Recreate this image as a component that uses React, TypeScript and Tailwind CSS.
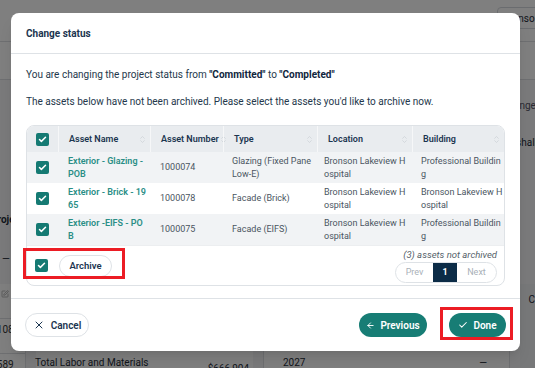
import { ArrowLeft, Check, ChevronsUpDown, SquarePen, X } from 'lucide-react';

const rows = [
  {
    name: ['Exterior - Glazing -', 'POB'],
    number: '1000074',
    type: ['Glazing (Fixed Pane', 'Low-E)'],
    location: ['Bronson Lakeview H', 'ospital'],
    building: ['Professional Buildin', 'g'],
  },
  {
    name: ['Exterior - Brick - 19', '65'],
    number: '1000078',
    type: ['Facade (Brick)'],
    location: ['Bronson Lakeview H', 'ospital'],
    building: ['Bronson Lakeview H', 'ospital'],
  },
  {
    name: ['Exterior -EIFS - PO', 'B'],
    number: '1000075',
    type: ['Facade (EIFS)'],
    location: ['Bronson Lakeview H', 'ospital'],
    building: ['Professional Buildin', 'g'],
  },
];

const cols = 'grid grid-cols-[31px_92px_73px_94px_95px_92px]';

function Box() {
  return (
    <span className="flex h-[13px] w-[13px] items-center justify-center rounded-[2px] bg-[#157a73]">
      <Check className="h-[9px] w-[9px] text-white" strokeWidth={4} />
    </span>
  );
}

function Lines({ parts }: { parts: string[] }) {
  return (
    <div>
      {parts.map((p) => (
        <span key={p} className="block whitespace-nowrap">
          {p}
        </span>
      ))}
    </div>
  );
}

function Head({ label }: { label: string }) {
  return (
    <div className="flex items-center justify-between border-l border-[#f6f7f8] pl-[10px] pr-[3px]">
      <span className="whitespace-nowrap">{label}</span>
      <ChevronsUpDown className="h-[9px] w-[9px] shrink-0 text-[#c4c9ce]" strokeWidth={1.5} />
    </div>
  );
}

function Backdrop() {
  return (
    <div className="absolute inset-0 bg-[#f4f5f7] text-[#1e2b38]">
      <div className="flex h-[42px] items-start justify-end border-b border-[#dcdfe3] bg-white">
        <div className="mr-[-12px] mt-[7px] flex h-[22px] w-[50px] items-center rounded-[4px] border border-[#d5d9de] pl-[3px] text-[10px]">
          Sponsor
        </div>
      </div>
      <div className="h-[38px] border-b border-[#dcdfe3] bg-white" />
      <div className="flex justify-end pt-[18px] text-[10px] text-[#556]">
        <span className="mr-[-6px]">Changes</span>
      </div>
      <div className="mt-[22px] flex justify-end text-[10px]">
        <span className="mr-[-2px]">Marshall</span>
      </div>
      <div className="ml-[-9px] mt-[62px] text-[10px] font-bold">Project</div>
      <div className="ml-[2px] mt-[24px] text-[10px]">—</div>
      <div className="mt-[18px] flex gap-[10px]">
        <div className="flex h-[90px] w-[27px] flex-col border-r border-[#dcdfe3] bg-white text-[10px] text-[#333]">
          <SquarePen className="ml-[1px] mt-[6px] h-[8px] w-[8px] text-[#999]" />
          <div className="mt-[20px] border-t border-[#dcdfe3] pt-[3px]">
            <span className="ml-[-22px]">$89,108</span>
          </div>
          <div className="mt-[16px] border-t border-[#dcdfe3] pt-[3px]">
            <span className="ml-[-22px]">$12,589</span>
          </div>
        </div>
        <div className="h-[90px] w-[223px] bg-white" />
        <div className="h-[90px] w-[255px] border border-[#dcdfe3] bg-white" />
        <div className="h-[90px] flex-1 bg-[#eef0f2] pl-[8px] pt-[8px] text-[10px]">C</div>
      </div>
      <div className="absolute left-[27px] top-[352px] flex w-[230px] justify-between px-[8px] pt-[3px] text-[10px]">
        <span>Total Labor and Materials</span>
        <span className="mt-[6px]">$666,904</span>
      </div>
      <div className="absolute left-[275px] top-[352px] flex w-[220px] justify-between px-[8px] pt-[3px] text-[10px]">
        <span>2027</span>
        <span>—</span>
      </div>
    </div>
  );
}

export default function App() {
  return (
    <div className="relative h-[368px] w-[535px] overflow-hidden font-['Roboto',sans-serif]">
      <Backdrop />
      <div className="absolute inset-0 bg-black/50" />

      <div className="absolute left-[11px] top-[13px] flex h-[338px] w-[509px] flex-col rounded-[8px] bg-white text-[#24374b] shadow-lg">
        <div className="flex h-[41px] items-center border-b border-[#dee2e6] px-[15px]">
          <h1 className="text-[10px] font-bold text-[#1b3550]">Change status</h1>
        </div>

        <div className="px-[15px] pt-[13px] text-[10px] leading-[15px]">
          <p>
            You are changing the project status from <strong className="text-[#10263d]">"Committed"</strong> to{' '}
            <strong className="text-[#10263d]">"Completed"</strong>
          </p>
          <p className="mt-[12px]">The assets below have not been archived. Please select the assets you'd like to archive now.</p>

          <div className="mt-[16px] overflow-hidden rounded-[8px] border border-[#dee2e6] text-[9px] leading-[13px]">
            <div className={`${cols} h-[26px] bg-[#e9ecef] font-semibold text-[#1b3550]`}>
              <div className="flex items-center justify-center">
                <Box />
              </div>
              <Head label="Asset Name" />
              <Head label="Asset Number" />
              <Head label="Type" />
              <Head label="Location" />
              <Head label="Building" />
            </div>
            {rows.map((r, i) => (
              <div key={r.number} className={`${cols} h-[31px] items-center ${i === 1 ? 'bg-white' : 'bg-[#f1f3f5]'} text-[#4a5561]`}>
                <div className="flex items-center justify-center">
                  <Box />
                </div>
                <div className="pl-[10px] font-semibold text-[#2a8e86]">
                  <Lines parts={r.name} />
                </div>
                <div className="pl-[10px]">{r.number}</div>
                <div className="pl-[9px]">
                  <Lines parts={r.type} />
                </div>
                <div className="pl-[7px]">
                  <Lines parts={r.location} />
                </div>
                <div className="pl-[9px]">
                  <Lines parts={r.building} />
                </div>
              </div>
            ))}
            <div className="flex h-[40px] items-center justify-between border-t border-[#eceef0] pl-[8px] pr-[7px]">
              <div className="flex items-center gap-[11px]">
                <Box />
                <button className="h-[22px] w-[53px] rounded-full border border-[#dee2e6] text-[9.5px] font-semibold text-[#1b3550]">
                  Archive
                </button>
              </div>
              <div className="flex flex-col items-end">
                <span className="text-[9.5px] italic text-[#555f6a]">(3) assets not archived</span>
                <div className="mt-[1px] flex h-[21px] overflow-hidden rounded-full border border-[#dee2e6] text-[9px]">
                  <span className="flex w-[37px] items-center justify-center text-[#a9b0b8]">Prev</span>
                  <span className="flex w-[24px] items-center justify-center bg-[#0c2c47] font-bold text-white">1</span>
                  <span className="flex w-[39px] items-center justify-center text-[#a9b0b8]">Next</span>
                </div>
              </div>
            </div>
          </div>
        </div>

        <div className="mt-auto flex h-[53px] items-center justify-between border-t border-[#dee2e6] px-[14px] text-[10px] font-semibold">
          <button className="flex h-[24px] w-[64px] items-center justify-center gap-[6px] rounded-full border border-[#dee2e6] text-[#1b3550]">
            <X className="h-[12px] w-[12px]" strokeWidth={2} />
            Cancel
          </button>
          <div className="flex gap-[22px]">
            <button className="flex h-[24px] w-[68px] items-center justify-center gap-[5px] rounded-full bg-[#177d75] text-white">
              <ArrowLeft className="h-[9px] w-[9px]" strokeWidth={2.5} />
              Previous
            </button>
            <button className="flex h-[24px] w-[57px] items-center justify-center gap-[5px] rounded-full bg-[#177d75] text-white">
              <Check className="h-[10px] w-[10px]" strokeWidth={2.5} />
              Done
            </button>
          </div>
        </div>
      </div>

      <div className="absolute left-[23px] top-[248px] h-[31px] w-[102px] border-[3px] border-[#ec1c24]" />
      <div className="absolute left-[440px] top-[307px] h-[33px] w-[73px] border-[3px] border-[#ec1c24]" />
    </div>
  );
}
